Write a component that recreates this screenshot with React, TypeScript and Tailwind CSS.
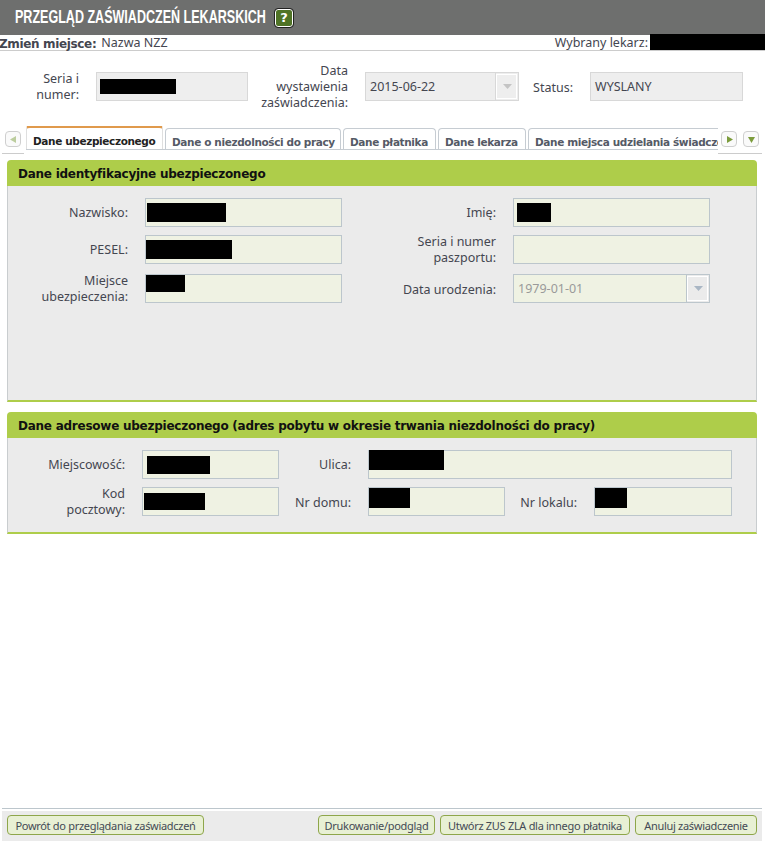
const sans = 'font-["Noto_Sans",sans-serif]'
const bold = 'font-["DejaVu_Sans",sans-serif] font-bold'

function Bar({ className }: { className: string }) {
  return <span className={`block bg-black ${className}`} />
}

function Input({ className, children, bar }: { className: string; children?: React.ReactNode; bar?: string }) {
  return (
    <div className={`flex h-[29px] shrink-0 items-center border border-[#bcc6cc] bg-[#eff2e3] ${className}`}>
      {bar && <Bar className={bar} />}
      {children}
    </div>
  )
}

function Label({ className, children }: { className: string; children: React.ReactNode }) {
  return <div className={`shrink-0 pr-[17px] text-right leading-[16px] ${className}`}>{children}</div>
}

function Arrow({ color }: { color: string }) {
  return (
    <svg width="9" height="5" viewBox="0 0 9 5">
      <path d="M0 0h9L4.500 5z" fill={color} />
    </svg>
  )
}

function NavButton({ dir }: { dir: 'left' | 'right' | 'down' }) {
  const points = dir === 'left' ? '8,2 8,9 2,5.500' : dir === 'right' ? '3,2 3,9 9,5.500' : '2,3 9,3 5.500,9'
  return (
    <div className="flex h-[16px] w-[16px] items-center justify-center rounded-[4px] border border-[#cfcfcf] bg-[#fafafa]">
      <svg width="11" height="11" viewBox="0 0 11 11">
        <polygon points={points} fill={dir === 'left' ? '#bccd9e' : '#7c9c3c'} />
      </svg>
    </div>
  )
}

function Tab({ children, active, className }: { children: React.ReactNode; active?: boolean; className: string }) {
  return (
    <div
      className={`shrink-0 overflow-hidden whitespace-nowrap rounded-t-[4px] border border-b-0 pl-[6px] text-[10.500px] tracking-[-0.37px] ${bold} ${
        active
          ? 'h-[24px] border-[#dfdfdf] border-t-[3px] border-t-[#e09a4c] bg-white pt-[6px] text-[#222]'
          : 'h-[21px] border-[#c6ccd2] border-t-[#c6ccd2] bg-white pt-[6px] text-[#555a66]'
      } ${className}`}
    >
      {children}
    </div>
  )
}

function Panel({ title, className, children }: { title: string; className: string; children: React.ReactNode }) {
  return (
    <section className={`mx-[7px] w-[750px] ${className}`}>
      <h2 className={`flex h-[26px] items-center rounded-t-[4px] bg-[#aecd4a] pl-[11px] pt-[2px] text-[12px] tracking-[-0.25px] text-[#111] ${bold}`}>{title}</h2>
      <div className="h-[calc(100%-26px)] border-x border-b-2 border-[#c9cdcf] border-b-[#aecd4a] bg-[#ebebeb]">{children}</div>
    </section>
  )
}

function Button({ children, className }: { children: React.ReactNode; className: string }) {
  return (
    <button className={`h-[20px] whitespace-nowrap rounded-[4px] border border-[#8ea64a] bg-[#e8f0d4] text-center text-[11px] leading-[17px] tracking-[-0.3px] text-[#444a55] ${className}`}>
      {children}
    </button>
  )
}

export default function App() {
  return (
    <div className={`flex h-[845px] w-[765px] flex-col overflow-hidden bg-white text-[12.500px] text-[#444650] ${sans}`}>
      <header className="flex h-[35px] shrink-0 items-center bg-[#6e6f6e] pl-[15px]">
        <div className="w-[251px] overflow-visible">
          <h1 className='origin-left scale-x-[0.66] whitespace-nowrap font-["Liberation_Sans",sans-serif] text-[19px] font-bold text-white'>
            PRZEGLĄD ZAŚWIADCZEŃ LEKARSKICH
          </h1>
        </div>
        <div className='ml-[9px] flex h-[18px] w-[18px] items-center justify-center rounded-[3px] border border-white bg-[#4f7326] font-["DejaVu_Sans",sans-serif] text-[13px] font-bold leading-none text-white outline outline-1 outline-[#222]'>
          ?
        </div>
      </header>

      <div className="flex h-[16px] shrink-0 items-center border-b border-[#cccccc]">
        <span className={`ml-[-1px] pt-[2px] text-[12px] tracking-[-0.35px] ${bold}`}>Zmień miejsce:</span>
        <span className="ml-[5px] pt-[2px]">Nazwa NZZ</span>
        <span className="ml-auto pt-[2px]">Wybrany lekarz:</span>
        <Bar className="ml-[2px] mt-[-1px] h-[16px] w-[115px]" />
      </div>

      <div className="mt-[21px] flex h-[29px] shrink-0 items-center">
        <Label className="w-[96px]">
          Seria i
          <br />
          numer:
        </Label>
        <div className="flex h-[29px] w-[152px] items-center border border-[#d8d8d8] bg-[#eeeeee] pl-[3px]">
          <Bar className="h-[15px] w-[76px]" />
        </div>
        <Label className="w-[117px]">
          Data
          <br />
          wystawienia
          <br />
          zaświadczenia:
        </Label>
        <div className="flex h-[29px] w-[154px] items-center border border-[#d8d8d8] bg-[#eeeeee] pl-[4px]">
          <span className="grow pt-[2px]">2015-06-22</span>
          <div className="flex h-full w-[23px] items-center justify-center border-l border-[#d8d8d8] bg-[#eeeeee] outline outline-1 -outline-offset-2 outline-white">
            <Arrow color="#c4c4c4" />
          </div>
        </div>
        <Label className="w-[71px] pt-[2px]">Status:</Label>
        <div className="flex h-[29px] w-[153px] items-center border border-[#d8d8d8] bg-[#eeeeee] pl-[4px] pt-[2px]">WYSLANY</div>
      </div>

      <div className="mt-[25px] flex h-[28px] shrink-0 items-start">
        <div className="ml-[2px] h-[28px] w-[22px] border-b border-[#cccccc] pl-[3px] pt-[5px]">
          <NavButton dir="left" />
        </div>
        <div className="ml-[2px] flex h-[24px] w-[692px] items-end gap-[2px] overflow-hidden border-b border-[#c6ccd2]">
          <Tab active className="w-[137px]">Dane ubezpieczonego</Tab>
          <Tab className="w-[176px]">Dane o niezdolności do pracy</Tab>
          <Tab className="w-[93px]">Dane płatnika</Tab>
          <Tab className="w-[88px]">Dane lekarza</Tab>
          <Tab className="w-[200px]">Dane miejsca udzielania świadczeń</Tab>
        </div>
        <div className="flex h-[28px] w-[44px] gap-[6px] border-b border-[#cccccc] pl-[3px] pt-[5px]">
          <NavButton dir="right" />
          <NavButton dir="down" />
        </div>
      </div>

      <Panel title="Dane identyfikacyjne ubezpieczonego" className="mt-[6px] h-[242px] shrink-0">
        <div className="flex flex-col pt-[12px]">
          <div className="flex h-[29px] items-center">
            <Label className="w-[137px]">Nazwisko:</Label>
            <Input className="w-[197px] pl-[1px]" bar="h-[19px] w-[79px]" />
            <Label className="w-[171px]">Imię:</Label>
            <Input className="w-[197px] pl-[3px]" bar="h-[19px] w-[34px]" />
          </div>
          <div className="mt-[8px] flex h-[29px] items-center">
            <Label className="w-[137px]">PESEL:</Label>
            <Input className="w-[197px] pl-0" bar="h-[19px] w-[86px]" />
            <Label className="w-[171px]">
              Seria i numer
              <br />
              paszportu:
            </Label>
            <Input className="w-[197px]" />
          </div>
          <div className="mt-[10px] flex h-[29px] items-center">
            <Label className="w-[137px]">
              Miejsce
              <br />
              ubezpieczenia:
            </Label>
            <Input className="w-[197px]" bar="mb-[10px] h-[17px] w-[39px]" />
            <Label className="w-[171px] pt-[2px]">Data urodzenia:</Label>
            <Input className="w-[197px] pl-[4px]">
              <span className="grow pt-[2px] text-[#9a9a9a]">1979-01-01</span>
              <div className="flex h-full w-[23px] items-center justify-center border-l border-[#bcc6cc] bg-[#ebebeb] outline outline-1 -outline-offset-2 outline-white">
                <Arrow color="#a9b6c4" />
              </div>
            </Input>
          </div>
        </div>
      </Panel>

      <Panel
        title="Dane adresowe ubezpieczonego (adres pobytu w okresie trwania niezdolności do pracy)"
        className="mt-[10px] h-[122px] shrink-0"
      >
        <div className="flex flex-col pt-[12px]">
          <div className="flex h-[29px] items-center">
            <Label className="w-[134px]">Miejscowość:</Label>
            <Input className="w-[137px] pl-[4px]" bar="h-[18px] w-[63px]" />
            <Label className="w-[89px]">Ulica:</Label>
            <Input className="w-[364px]" bar="mb-[9px] h-[20px] w-[75px]" />
          </div>
          <div className="mt-[8px] flex h-[29px] items-center">
            <Label className="w-[134px]">
              Kod
              <br />
              pocztowy:
            </Label>
            <Input className="w-[137px] pl-[1px]" bar="h-[17px] w-[61px]" />
            <Label className="w-[89px] pt-[2px]">Nr domu:</Label>
            <Input className="w-[137px] pl-0" bar="mb-[7px] h-[20px] w-[41px]" />
            <Label className="w-[89px] pt-[2px]">Nr lokalu:</Label>
            <Input className="w-[138px] pl-0" bar="mb-[7px] h-[20px] w-[32px]" />
          </div>
        </div>
      </Panel>

      <footer className="ml-[2px] mt-[274px] flex h-[33px] w-[760px] shrink-0 items-start border-t border-[#bcc6cc] bg-[#ebebeb] pl-[5px] pt-[6px] shadow-[inset_0_2px_0_#ffffff]">
        <Button className="w-[197px]">Powrót do przeglądania zaświadczeń</Button>
        <Button className="ml-[114px] w-[117px]">Drukowanie/podgląd</Button>
        <Button className="ml-[5px] w-[190px]">Utwórz ZUS ZLA dla innego płatnika</Button>
        <Button className="ml-[5px] w-[122px]">Anuluj zaświadczenie</Button>
      </footer>
    </div>
  )
}
